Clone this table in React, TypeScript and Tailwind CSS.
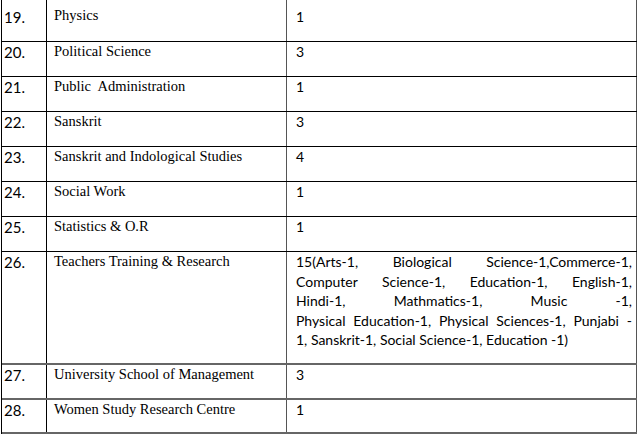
const rows = [
  { n: '19.', s: 'Physics', c: '1' },
  { n: '20.', s: 'Political Science', c: '3' },
  { n: '21.', s: 'Public  Administration', c: '1' },
  { n: '22.', s: 'Sanskrit', c: '3' },
  { n: '23.', s: 'Sanskrit and Indological Studies', c: '4' },
  { n: '24.', s: 'Social Work', c: '1' },
  { n: '25.', s: 'Statistics & O.R', c: '1' },
];

const tail = [
  { n: '27.', s: 'University School of Management', c: '3' },
  { n: '28.', s: 'Women Study Research Centre', c: '1' },
];

const justified = [
  '15(Arts-1, Biological Science-1,Commerce-1,',
  'Computer Science-1, Education-1, English-1,',
  'Hindi-1, Mathmatics-1, Music -1,',
  'Physical Education-1, Physical Sciences-1, Punjabi -',
];

const numCls = "w-[45px] shrink-0 border-r border-black pl-[2px] font-[family-name:'Lato',sans-serif] text-[15px] leading-[18px]";
const subjCls = "w-[240px] shrink-0 border-r border-[#555] pl-[7px] font-[family-name:'Liberation_Serif',serif] text-[14.5px] leading-[18px] whitespace-pre";
const cntCls = "w-[350px] shrink-0 border-r border-[#555] pl-[9px] font-[family-name:'Lato',sans-serif] text-[14px]";

function Row({ n, s, c, h, first }: { n: string; s: string; c: string; h: string; first?: boolean }) {
  return (
    <div className={`flex border-b border-black ${h}`}>
      <div className={`${numCls} ${first ? 'pt-[8px]' : 'pt-[1px]'}`}>{n}</div>
      <div className={`${subjCls} ${first ? 'pt-[6px]' : 'pt-0'}`}>{s}</div>
      <div className={`${cntCls} leading-[18px] ${first ? 'pt-[8px]' : 'pt-[1px]'}`}>{c}</div>
    </div>
  );
}

export default function App() {
  return (
    <div className="w-[640px] h-[437px] bg-white text-black overflow-hidden">
      <div className="ml-[1px] w-[636px] border-l border-black">
        {rows.map((r, i) => (
          <Row key={r.n} {...r} h={i === 0 ? 'h-[42px]' : 'h-[35px]'} first={i === 0} />
        ))}

        {/* row 26 with the long breakdown */}
        <div className="flex h-[113px] border-b-2 border-[#666]">
          <div className={`${numCls} pt-[1px]`}>26.</div>
          <div className={`${subjCls} pt-0`}>Teachers Training &amp; Research</div>
          <div className={`${cntCls} pr-[4px] pt-0 leading-[19.5px]`}>
            {justified.map((l) => (
              <div key={l} className="text-justify [text-align-last:justify]">
                {l}
              </div>
            ))}
            <div>1, Sanskrit-1, Social Science-1, Education -1)</div>
          </div>
        </div>

        {tail.map((r) => (
          <div key={r.n} className="flex h-[35px] border-b-2 border-[#666] last:h-[34px]">
            <div className={`${numCls} pt-[1px]`}>{r.n}</div>
            <div className={`${subjCls} pt-0`}>{r.s}</div>
            <div className={`${cntCls} leading-[18px] pt-[1px]`}>{r.c}</div>
          </div>
        ))}
      </div>
    </div>
  );
}
